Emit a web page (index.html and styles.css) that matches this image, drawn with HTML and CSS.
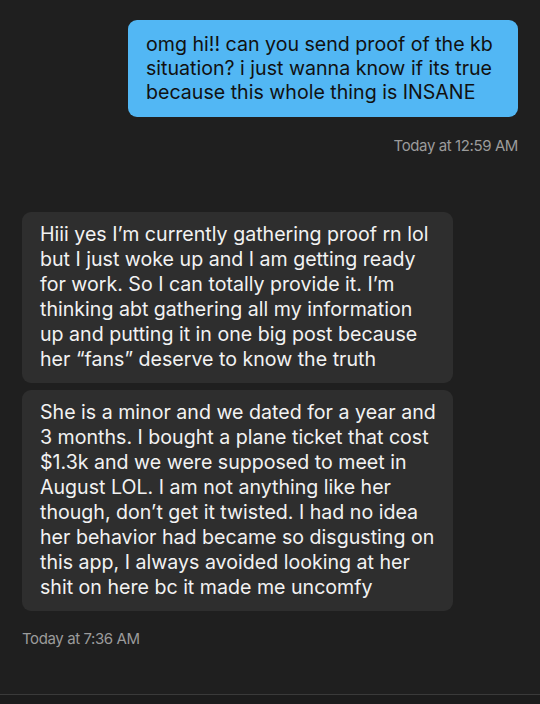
FILE: index.html
```html
<!DOCTYPE html>
<html lang="en">
<head>
    <meta charset="UTF-8">
    <meta name="viewport" content="width=device-width, initial-scale=1.0">
    <title>Messages</title>
    <link rel="stylesheet" href="styles.css">
</head>
<body>
    <div class="chat">
        <div class="group sent">
            <div class="bubble blue">omg hi!! can you send proof of the kb situation? i just wanna know if its true because this whole thing is INSANE</div>
            <div class="time">Today at 12:59 AM</div>
        </div>
        <div class="group received">
            <div class="bubble grey">Hiii yes I’m currently gathering proof rn lol but I just woke up and I am getting ready for work. So I can totally provide it. I’m thinking abt gathering all my information up and putting it in one big post because her “fans” deserve to know the truth</div>
            <div class="bubble grey">She is a minor and we dated for a year and 3 months. I bought a plane ticket that cost $1.3k and we were supposed to meet in August LOL. I am not anything like her though, don’t get it twisted. I had no idea her behavior had became so disgusting on this app, I always avoided looking at her shit on here bc it made me uncomfy</div>
            <div class="time">Today at 7:36 AM</div>
        </div>
    </div>
    <div class="bottom"></div>
</body>
</html>
```

FILE: styles.css
```css
body {
    margin: 0;
    height: 704px;
    background: #1f1f1f;
    font-family: 'Inter', sans-serif;
    display: flex;
    flex-direction: column;
    overflow: hidden;
}
.chat {
    flex: 1;
    padding: 20px 22px 0 22px;
}
.group {
    display: flex;
    flex-direction: column;
}
.sent {
    align-items: flex-end;
}
.received {
    align-items: flex-start;
    margin-top: 57px;
}
.bubble {
    border-radius: 9px;
    font-size: 19.6px;
    line-height: 25px;
    box-sizing: border-box;
}
.blue {
    width: 390px;
    background: #52b7f4;
    color: #111;
    padding: 12px 18px 13px 18px;
    line-height: 24px;
}
.grey {
    width: 431px;
    background: #2e2e2e;
    color: #f2f2f2;
    padding: 10px 16px 11px 18px;
    margin-bottom: 7px;
}
.time {
    color: #9b9b9b;
    font-size: 15px;
    letter-spacing: -0.4px;
    margin-top: 19px;
}
.received .time {
    margin-top: 11px;
}
.bottom {
    height: 9px;
    border-top: 1px solid #3a3a3a;
    background: #1c1c1c;
}
```
